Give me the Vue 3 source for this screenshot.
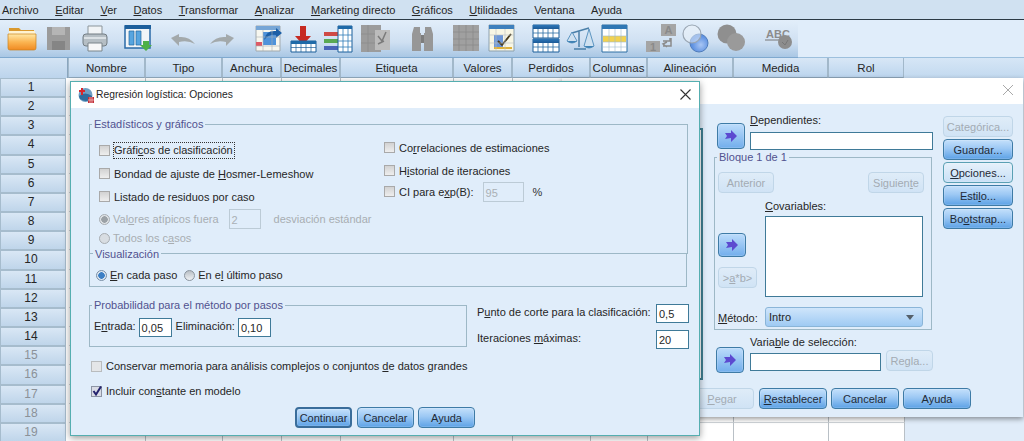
<script setup>
const menus = [
  ['', 'Archivo', ''], ['E', 'ditar', ''], ['V', 'er', ''], ['D', 'atos', ''], ['T', 'ransformar', ''],
  ['A', 'nalizar', ''], ['M', 'arketing directo', ''], ['G', 'ráficos', ''], ['U', 'tilidades', ''], ['', 'Ventana', ''], ['', 'Ayuda', '']
]
const cols = [
  ['Nombre', 77], ['Tipo', 77], ['Anchura', 59], ['Decimales', 59], ['Etiqueta', 113], ['Valores', 59],
  ['Perdidos', 78], ['Columnas', 57], ['Alineación', 86], ['Medida', 95], ['Rol', 76]
]
const rows = Array.from({ length: 19 }, (_, i) => i + 1)
</script>

<template>
  <div class="page">
    <nav class="menu">
      <span v-for="m in menus" :key="m[1]"><u>{{ m[0] }}</u>{{ m[1] }}</span>
    </nav>
    <div class="toolbar-row">
      <svg class="toolbar" width="798" height="37" viewBox="0 20 798 37">
        <defs>
          <linearGradient id="fold" x1="0" y1="0" x2="0" y2="1"><stop offset="0" stop-color="#ffe9a8"/><stop offset=".5" stop-color="#fbb552"/><stop offset="1" stop-color="#f08a22"/></linearGradient>
          <linearGradient id="blu" x1="0" y1="0" x2="0" y2="1"><stop offset="0" stop-color="#2c76b8"/><stop offset="1" stop-color="#1c5a96"/></linearGradient>
          <radialGradient id="venn" cx=".6" cy=".6"><stop offset="0" stop-color="#a9c6f4"/><stop offset="1" stop-color="#5b8fe0"/></radialGradient>
        </defs>
        <!-- folder -->
        <path d="M9 28h10l2 2h13v5H9z" fill="#d9992f"/><path d="M9 31h26v4H9z" fill="#fff3d0"/>
        <path d="M8 34h28v14q0 2-2 2H10q-2 0-2-2z" fill="url(#fold)" stroke="#c9811e" stroke-width=".7"/>
        <!-- save -->
        <path d="M47 27h23v23H47z" fill="#9b9b9b"/><path d="M52 27h13v8H52z" fill="#b5b5b5"/><path d="M52 41h13v9H52z" fill="#858585"/>
        <!-- print -->
        <path d="M88 26h14v10H88z" fill="#f1f4f6" stroke="#8b959b"/><rect x="83" y="34" width="24" height="12" rx="3" fill="#b5bec4" stroke="#737d83"/>
        <path d="M84 37h22v2H84z" fill="#dbe1e5"/><path d="M88 43h14v8H88z" fill="#f6f7f8" stroke="#7a858b"/>
        <!-- variable view -->
        <path d="M125 26h25v22h-25z" fill="#f2f5f8" stroke="#2a6aa6" stroke-width="1.5"/><path d="M125 25h26v4h-26z" fill="#1d5f9c"/>
        <path d="M129 31h5v14h-5zM136 31h5v14h-5z" fill="#57a5e0" stroke="#23679f" stroke-width=".7"/>
        <path d="M143 41h6v4h3l-6 6-6-6h3z" fill="#4eb048"/>
        <!-- undo / redo -->
        <path d="M171 38l8-4v3q10-1 16 7-7-4-16-2v4z" fill="#a3a9ab"/>
        <path d="M234 38l-8-4v3q-10-1-16 7 7-4 16-2v4z" fill="#a3a9ab"/>
        <!-- go to case -->
        <path d="M256 26h24v25h-24z" fill="#f7f7ef" stroke="#a2a9ad"/><path d="M256 26h24v4h-24z" fill="#77a6d6"/>
        <path d="M263 32h13v13h-13z" fill="#4f93da"/><path d="M256 42h6v4h-6z" fill="#dd5b66"/>
        <path d="M264 40q2-10 12-9v-3l6 5-6 5v-3q-7-1-12 5z" fill="#1c5fa6"/>
        <path d="M263 30v21M272 30v21M256 37h24M256 46h24" stroke="#a9b0b4" stroke-width=".6"/>
        <!-- insert case -->
        <path d="M300 26h6v10h5l-8 9-8-9h5z" fill="#c62a22"/>
        <path d="M291 41h25v11h-25z" fill="#fff" stroke="#1b5f9a"/><path d="M291 41h25v3h-25z" fill="#1f6aa8"/>
        <path d="M296 44v8M301 44v8M306 44v8M311 44v8M291 47.500h25" stroke="#1b5f9a" stroke-width=".7"/>
        <!-- insert variable -->
        <path d="M324 32h14v4h-14z" fill="#cf4a45"/><path d="M324 39h14v4h-14z" fill="#5aa954"/><path d="M324 46h14v4h-14z" fill="#4b64b8"/>
        <path d="M338 26h14v26h-14z" fill="#fff" stroke="#1b5f9a"/><path d="M338 26h14v3h-14z" fill="#1f6aa8"/>
        <path d="M343 29v23M348 29v23M338 35h14M338 41h14M338 47h14" stroke="#2f7cb8" stroke-width=".8"/>
        <!-- split -->
        <path d="M361 25h20v27h-20z" fill="#9c9c9c"/><path d="M375 30h15v20h-15z" fill="#bcbcbc"/><path d="M378 36l4 5 4-9M378 44l6-3" stroke="#7b7b7b" fill="none" stroke-width="1.500"/>
        <path d="M368 25v27M361 34h14M361 43h14" stroke="#8a8a8a" stroke-width=".7"/>
        <!-- binoculars -->
        <path d="M414 27h6v6h1v18h-9V34zM425 27h6l2 7v17h-9V33h1z" fill="#979797"/><path d="M421 35h3v8h-3z" fill="#7d7d7d"/>
        <!-- gray grid -->
        <path d="M453 25h26v26h-26z" fill="#a0a0a0"/>
        <path d="M459 25v26M466 25v26M473 25v26M453 32h26M453 39h26M453 45h26" stroke="#8c8c8c" stroke-width=".8"/>
        <!-- check sheet -->
        <path d="M489 25h25v26h-25z" fill="#f8f6e4" stroke="#8ca0ae"/><path d="M489 25h25v4h-25z" fill="#3e80bd"/>
        <path d="M494 35h9v12h-9z" fill="#6d97d8"/><path d="M494 47h18v2h-18z" fill="#e0b23a"/><path d="M498 41l4 4 9-11" stroke="#473a1e" fill="none" stroke-width="1.800"/>
        <path d="M496 29v22M505 29v22M489 35h25M489 43h25" stroke="#b9c0c4" stroke-width=".6"/>
        <!-- two tables -->
        <g><path d="M533 25h26v13h-26z" fill="#fff" stroke="#1b5f9a"/><path d="M533 25h26v4h-26z" fill="url(#blu)"/><path d="M538 29v9M543 29v9M548 29v9M553 29v9M533 33h26" stroke="#2a6ca3" stroke-width=".8"/></g>
        <g transform="translate(0 14)"><path d="M533 25h26v13h-26z" fill="#fff" stroke="#1b5f9a"/><path d="M533 25h26v4h-26z" fill="url(#blu)"/><path d="M538 29v9M543 29v9M548 29v9M553 29v9M533 33h26" stroke="#2a6ca3" stroke-width=".8"/></g>
        <!-- scale -->
        <path d="M572 33l17-5M579 31v16M574 49h12" stroke="#4a7fa8" stroke-width="1.500" fill="none"/>
        <path d="M567 41l5-9 5 9q-5 4-10 0zM584 46l5-17 5 17q-5 4-10 0z" fill="#cfe1f0" stroke="#3f82b4" stroke-width=".8"/>
        <path d="M567 41h10q-5 4-10 0zM584 46h10q-5 4-10 0z" fill="#3f82b4"/>
        <!-- yellow table -->
        <path d="M602 25h25v27h-25z" fill="#fff" stroke="#2d6ea3"/><path d="M602 25h25v4h-25z" fill="#2f77b4"/><path d="M603 36h23v6h-23z" fill="#f2d24f"/>
        <path d="M609 29v23M615 29v23M621 29v23M602 36h25M602 42h25M602 47h25" stroke="#9eb9cf" stroke-width=".6"/>
        <!-- value labels -->
        <path d="M661 24h15v12h-15z" fill="#a5a5a5"/><text x="668.500" y="34" class="ti">A</text>
        <path d="M646 41h14v11h-14z" fill="#a5a5a5"/><text x="653" y="51" class="ti">1</text>
        <path d="M663 41h7v-3M663 46h8V38M667 42l-4 2 4 3" stroke="#8b8b8b" fill="none" stroke-width="1.500"/>
        <!-- venn -->
        <circle cx="699" cy="43" r="9" fill="url(#venn)" stroke="#4f7cba"/><circle cx="692" cy="34" r="9" fill="#eef3f9" fill-opacity=".5" stroke="#9aa6b3" stroke-width="1.200"/>
        <!-- gray circles -->
        <circle cx="727" cy="34" r="9.500" fill="#8f8f8f"/><circle cx="736" cy="42" r="9" fill="#9a9a9a"/>
        <!-- spell -->
        <text x="766" y="38" class="abc">ABC</text><path d="M765 40h22" stroke="#777"/><circle cx="785" cy="42" r="7" fill="#8d8d8d"/><path d="M782 42l3 3 3-5" stroke="#777" fill="none"/>
      </svg>
      <div class="toolbar-rest"></div>
    </div>

    <div class="headers">
      <div class="corner"></div>
      <div v-for="c in cols" :key="c[0]" class="col-head" :style="{ width: c[1] + 'px' }">{{ c[0] }}</div>
    </div>

    <div class="table">
      <div v-for="r in rows" :key="r" class="row">
        <div class="row-head" :class="{ faded: r > 14 }">{{ r }}</div>
        <div class="gap"></div>
        <div v-for="c in cols" :key="c[0]" class="cell" :style="{ width: c[1] + 'px' }"></div>
      </div>
    </div>

    <!-- back dialog -->
    <section class="win back">
      <header class="title"><svg class="close" width="12" height="12" viewBox="0 0 12 12"><path d="M1 1l10 10M11 1L1 11" stroke="#a9a9a9" stroke-width="1"/></svg></header>
      <div class="back-body">
        <div class="back-top">
          <div class="varlist"></div>
          <div class="mid">
            <div class="dep">
              <button class="btn arrow"><svg width="14" height="12" viewBox="0 0 14 12"><path d="M1 3h6V0l6 6-6 6V8L1 9l2-3z" fill="#5c4ad0"/></svg></button>
              <div class="dep-col">
                <label><u>D</u>ependientes:</label>
                <div class="field dep-field"></div>
              </div>
            </div>
            <div class="group block">
              <span class="legend">Bloque 1 de 1</span>
              <div class="nav-row">
                <button class="btn off nav">Anterior</button>
                <button class="btn off nav">Siguien<u>t</u>e</button>
              </div>
              <div class="cov">
                <div class="cov-left">
                  <button class="btn arrow"><svg width="14" height="12" viewBox="0 0 14 12"><path d="M1 3h6V0l6 6-6 6V8L1 9l2-3z" fill="#5c4ad0"/></svg></button>
                  <button class="btn off ab">&gt;<u>a</u>*b&gt;</button>
                </div>
                <div class="cov-right">
                  <label><u>C</u>ovariables:</label>
                  <div class="field covlist"></div>
                </div>
              </div>
              <div class="method">
                <label><u>M</u>étodo:</label>
                <div class="select"><span>Intro</span><i></i></div>
              </div>
            </div>
            <div class="sel">
              <button class="btn arrow"><svg width="14" height="12" viewBox="0 0 14 12"><path d="M1 3h6V0l6 6-6 6V8L1 9l2-3z" fill="#5c4ad0"/></svg></button>
              <div class="sel-col">
                <label>Varia<u>b</u>le de selección:</label>
                <div class="sel-row">
                  <div class="field sel-field"></div>
                  <button class="btn off regla">Regla...</button>
                </div>
              </div>
            </div>
          </div>
          <div class="side">
            <button class="btn off">Cate<u>g</u>órica...</button>
            <button class="btn">Guardar...</button>
            <button class="btn pale"><u>O</u>pciones...</button>
            <button class="btn">Esti<u>l</u>o...</button>
            <button class="btn">Bo<u>o</u>tstrap...</button>
          </div>
        </div>
        <div class="back-bottom">
          <button class="btn off wide"><u>P</u>egar</button>
          <button class="btn wide"><u>R</u>establecer</button>
          <button class="btn wide">Cancelar</button>
          <button class="btn wide">Ayuda</button>
        </div>
      </div>
    </section>

    <!-- front dialog -->
    <section class="win front">
      <header class="title">
        <svg class="logo" width="16" height="16" viewBox="0 0 16 16">
          <circle cx="7.500" cy="8" r="7" fill="#6f9fc4"/><path d="M1 9q6-5 13 0v3q-6 4-12 0z" fill="#2e6b9e"/>
          <path d="M4 1v7M1 4h6" stroke="#d8262c" stroke-width="2"/><path d="M10 10h6v6h-6z" fill="#c2303a"/><path d="M12 10v6M14 10v6M10 13h6" stroke="#f3c8c8" stroke-width=".7"/>
        </svg>
        <span class="title-text">Regresión logística: Opciones</span>
        <svg class="close" width="11" height="11" viewBox="0 0 11 11"><path d="M.5.500l10 10M10.500.500l-10 10" stroke="#333" stroke-width="1.100"/></svg>
      </header>
      <div class="front-body">
        <div class="group stats">
          <span class="legend">Estadísticos y gráficos</span>
          <div class="stats-left">
            <div class="opt r1"><i class="chk"></i><span class="focus">Gráfi<u>c</u>os de clasificación</span></div>
            <div class="opt r1"><i class="chk"></i><span>Bondad de ajuste de <u>H</u>osmer-Lemeshow</span></div>
            <div class="opt r1"><i class="chk"></i><span>Listado de residuos por caso</span></div>
            <div class="opt r2 dis"><i class="rad on-dis"></i><span>Val<u>o</u>res atípicos fuera</span><div class="field dis-field two">2</div><span class="dev">desviación estándar</span></div>
            <div class="opt r4 dis"><i class="rad"></i><span>Todos los c<u>a</u>sos</span></div>
          </div>
          <div class="stats-right">
            <div class="opt r1"><i class="chk"></i><span>Co<u>r</u>relaciones de estimaciones</span></div>
            <div class="opt r1"><i class="chk"></i><span>H<u>i</u>storial de iteraciones</span></div>
            <div class="opt r3"><i class="chk"></i><span>CI para e<u>x</u>p(B):</span><div class="field dis-field nf">95</div><span class="pct">%</span></div>
          </div>
        </div>
        <div class="group vis">
          <span class="legend">Visualización</span>
          <div class="opt"><i class="rad on"></i><span><u>E</u>n cada paso</span><i class="rad second"></i><span>En e<u>l</u> último paso</span></div>
        </div>
        <div class="prob-row">
          <div class="group prob">
            <span class="legend">Probabilidad para el método por pasos</span>
            <label>E<u>n</u>trada:</label><div class="field val">0,05</div>
            <label class="elim">Eliminación:</label><div class="field val">0,10</div>
          </div>
          <div class="cut">
            <div class="cut-row"><label>P<u>u</u>nto de corte para la clasificación:</label><div class="field val">0,5</div></div>
            <div class="cut-row"><label>Iteraciones <u>m</u>áximas:</label><div class="field val">20</div></div>
          </div>
        </div>
        <div class="opt line mem"><i class="chk pale-chk"></i><span>Conservar memoria para análisis complejos o conjuntos <u>d</u>e datos grandes</span></div>
        <div class="opt line inc"><i class="chk checked"><svg width="12" height="12" viewBox="0 0 12 12"><path d="M2.500 6l2.500 3.500L10 1.500" stroke="#23236e" stroke-width="2" fill="none"/></svg></i><span>Incluir con<u>s</u>tante en modelo</span></div>
        <div class="actions">
          <button class="btn act primary">Continuar</button>
          <button class="btn act">Cancelar</button>
          <button class="btn act">Ayuda</button>
        </div>
      </div>
    </section>
  </div>
</template>

<style scoped>
.page { position: relative; width: 1024px; height: 441px; overflow: hidden; background: #e0ecf9; font: 11px/14px "Liberation Sans", Arial, sans-serif; color: #262626; letter-spacing: 0; }
u { text-underline-offset: 1px; }
.menu { height: 19px; display: flex; gap: 16.500px; padding-left: 2px; align-items: center; background: #d0e1f1; border-bottom: 1px solid #2c3a46; }
.toolbar-row { display: flex; height: 38px; }
.toolbar { display: block; background: linear-gradient(#e2eefa, #cfe0f2 60%, #a9c7e4); border-bottom: 1px solid #7fa9cf; }
.toolbar-rest { flex: 1; background: #e0edfa; border-bottom: 1px solid #9dc0dd; height: 37px; }
.ti { font: bold 11px "Liberation Sans", sans-serif; fill: #8a8a8a; text-anchor: middle; }
.abc { font: bold 11px "Liberation Sans", sans-serif; fill: #8c8c8c; }
.headers { display: flex; height: 20px; background: linear-gradient(#d6e6f6, #c2d9ef); }
.corner { width: 68px; background: linear-gradient(#d4e4f4, #bcd4ec); border-right: 1px solid #8aa6be; box-sizing: border-box; }
.col-head { box-sizing: border-box; flex: none; text-align: center; line-height: 20px; font-size: 11.500px; background: linear-gradient(#d8e7f6, #bcd5ee); border: 1px solid #a2b8ca; border-width: 0 1px 1px 1px; border-bottom-color: #8ea6ba; }
.table { background: #e0ecf9; }
.row { display: flex; height: 19.170px; }
.row-head { width: 66px; padding-right: 4px; text-align: center; line-height: 16px; font-size: 12px; box-sizing: border-box; background: linear-gradient(#d9e7f5, #bfd5ea); border: 1px solid #a6bccd; }
.faded { color: #8b9198; }
.gap { width: 3px; background: #fff; }
.cell { box-sizing: border-box; flex: none; background: #fff; border-right: 1px solid #b9c0c6; border-bottom: 1px solid #cfd4d8; }

.win { position: absolute; box-sizing: border-box; background: #e0edfa; display: flex; flex-direction: column; }
.title { position: relative; flex: none; background: #fff; display: flex; align-items: center; }
.close { position: absolute; }
.back { left: 562px; top: 78px; width: 461px; height: 339px; box-shadow: 0 2px 5px rgba(0,0,0,.4); }
.back .title { height: 26px; }
.back .close { right: 9px; top: 6px; }
.back-body { flex: 1; display: flex; flex-direction: column; }
.back-top { height: 284px; display: flex; }
.varlist { width: 133px; margin: 24px 0 0 8px; height: 252px; box-sizing: border-box; border: 2px solid #3f7f92; background: #fff; flex: none; }
.mid { margin: 9px 0 0 11px; width: 220px; flex: none; }
.dep { display: flex; }
.btn { box-sizing: border-box; display: block; padding: 0; font: inherit; color: #1f2a36; text-align: center; border: 1px solid #3e7ba6; border-radius: 4px; background: linear-gradient(#c4e0fb, #9cc8f4 45%, #5da2e6); box-shadow: inset 0 0 0 1px rgba(255,255,255,.15); }
.off { color: #a3abb3; border-color: #c0d6e8; background: linear-gradient(#dfecf8, #d0e3f5); box-shadow: none; }
.pale { border-color: #5aa0b4; background: linear-gradient(#e6f1fb, #c8e0f6); }
.arrow { width: 28px; height: 26px; margin: 10px 0 0 3px; display: flex; align-items: center; justify-content: center; background: linear-gradient(#bcdcfb, #72aeec); flex: none; }
.dep-col { margin-left: 5px; }
label { display: block; }
.field { box-sizing: border-box; background: #fff; border: 1px solid #3f7a98; }
.dep-field { width: 183px; height: 18px; margin-top: 5px; }
.group { position: relative; box-sizing: border-box; border: 1px solid #9db8c6; }
.legend { position: absolute; left: 2px; top: -7px; padding: 0 2px; background: #e0edfa; color: #51528f; line-height: 13px; }
.block { width: 218px; height: 173px; margin-top: 7px; padding: 14px 7px 0 3px; }
.nav-row { display: flex; justify-content: space-between; }
.nav { width: 56px; height: 21px; }
.cov { display: flex; margin-top: 5px; }
.cov-left { width: 47px; flex: none; padding-top: 35px; }
.cov-left .arrow { margin: 0; height: 24px; }
.ab { width: 39px; height: 21px; margin-top: 10px; }
.cov-right label { line-height: 14px; margin-top: 1px; }
.covlist { width: 158px; height: 81px; margin-top: 3px; }
.method { display: flex; align-items: center; margin-top: 10px; }
.method label { width: 47px; flex: none; padding-top: 1px; }
.select { box-sizing: border-box; width: 158px; height: 20px; display: flex; align-items: center; justify-content: space-between; padding: 0 8px 0 3px; border: 1px solid #8ab5d8; border-radius: 3px; background: linear-gradient(#cfe5fb, #9fcaf3); }
.select i { width: 0; height: 0; border: 4px solid transparent; border-top: 5px solid #55606a; border-bottom: 0; }
.sel { display: flex; margin-top: 5px; }
.sel .arrow { margin: 12px 0 0 2px; }
.sel-col { margin-left: 6px; }
.sel-row { display: flex; align-items: flex-end; margin-top: 1px; }
.sel-field { width: 131px; height: 18px; }
.regla { width: 47px; height: 21px; margin-left: 5px; }
.side { margin: 12px 0 0 9px; width: 70px; display: flex; flex-direction: column; gap: 2px; }
.side .btn { height: 21px; }
.back-bottom { display: flex; gap: 4px; padding-left: 128px; }
.wide { width: 68px; height: 21px; }
.back-bottom .wide:first-child { width: 64px; margin-right: 1px; }

.front { left: 70px; top: 81px; width: 630px; height: 355px; border: 1px solid #55aeb0; box-shadow: 0 2px 7px rgba(0,0,0,.4); }
.front .title { height: 26px; }
.logo { margin: 0 2px 0 7px; }
.title-text { font-size: 10.300px; }
.front .close { right: 8px; top: 7px; }
.front-body { padding: 16px 0 0 18px; }
.stats { width: 599px; height: 130px; display: flex; }
.stats-left { box-sizing: border-box; width: 294px; padding: 14px 0 0 9px; flex: none; }
.stats-right { padding: 11px 0 0 0; }
.opt { display: flex; align-items: center; }
.r1 { height: 23px; }
.r2 { height: 22px; }
.r3 { height: 19px; }
.r4 { height: 16px; }
.dis { color: #a8adb2; }
.chk { flex: none; box-sizing: border-box; width: 11px; height: 11px; margin-right: 4px; border: 1px solid #a9a9a9; background: linear-gradient(#d2d2d2, #eeeeee); position: relative; }
.pale-chk { border-color: #b9bcbe; background: #e4e6e8; }
.checked { background: #d9dce6; border-color: #8d95a5; }
.checked svg { position: absolute; left: -1px; top: -2px; }
.rad { flex: none; box-sizing: border-box; width: 11px; height: 11px; border-radius: 50%; margin-right: 3px; background: #d8dde2; border: 1px solid #a8adb2; }
.on-dis { background: radial-gradient(circle, #9ba1a6 0 3px, #dfe3e6 3.500px); }
.on { background: radial-gradient(circle, #3d7fc4 0 3px, #dbe6f2 3.500px); border-color: #7a8fa5; }
.second { margin-left: 7px; background: linear-gradient(#b9bfc5, #eef1f4); border-color: #8a949e; }
.focus { outline: 1px dotted #333; outline-offset: 0; padding: 0 1px 1px 0; }
.dis-field { height: 20px; color: #aab0b5; border-color: #bccbd6; background: #e0edfa; padding-left: 2px; line-height: 20px; }
.two { width: 32px; margin-left: 10px; }
.dev { margin-left: 13px; }
.nf { width: 41px; margin-left: 9px; }
.pct { margin-left: 9px; color: #333; }
.vis { width: 598px; height: 34px; margin-top: -1px; padding: 14px 0 0 6px; }
.vis .legend { top: -6px; left: 3px; }
.prob-row { display: flex; height: 42px; margin-top: 18px; }
.prob { width: 378px; height: 42px; display: flex; align-items: flex-start; padding: 12px 0 0 4px; }
.prob label { margin-top: 1px; line-height: 14px; }
.prob .val { margin-left: 3px; }
.elim { margin-left: 4px; }
.val { width: 33px; height: 19px; line-height: 19px; padding-left: 2px; font-size: 11px; }
.cut { margin: -1px 0 0 10px; width: 212px; }
.cut-row { display: flex; justify-content: space-between; height: 19px; margin-bottom: 7px; }
.cut-row label { line-height: 17px; }
.line { height: 20px; margin-left: 2px; }
.mem { margin-top: 9px; }
.inc { margin-top: 5px; }
.actions { display: flex; gap: 4px; padding-left: 206px; margin-top: 6px; }
.act { width: 57px; height: 21px; }
.primary { border: 2px solid #3a6d9a; margin-right: 1px; }
</style>
